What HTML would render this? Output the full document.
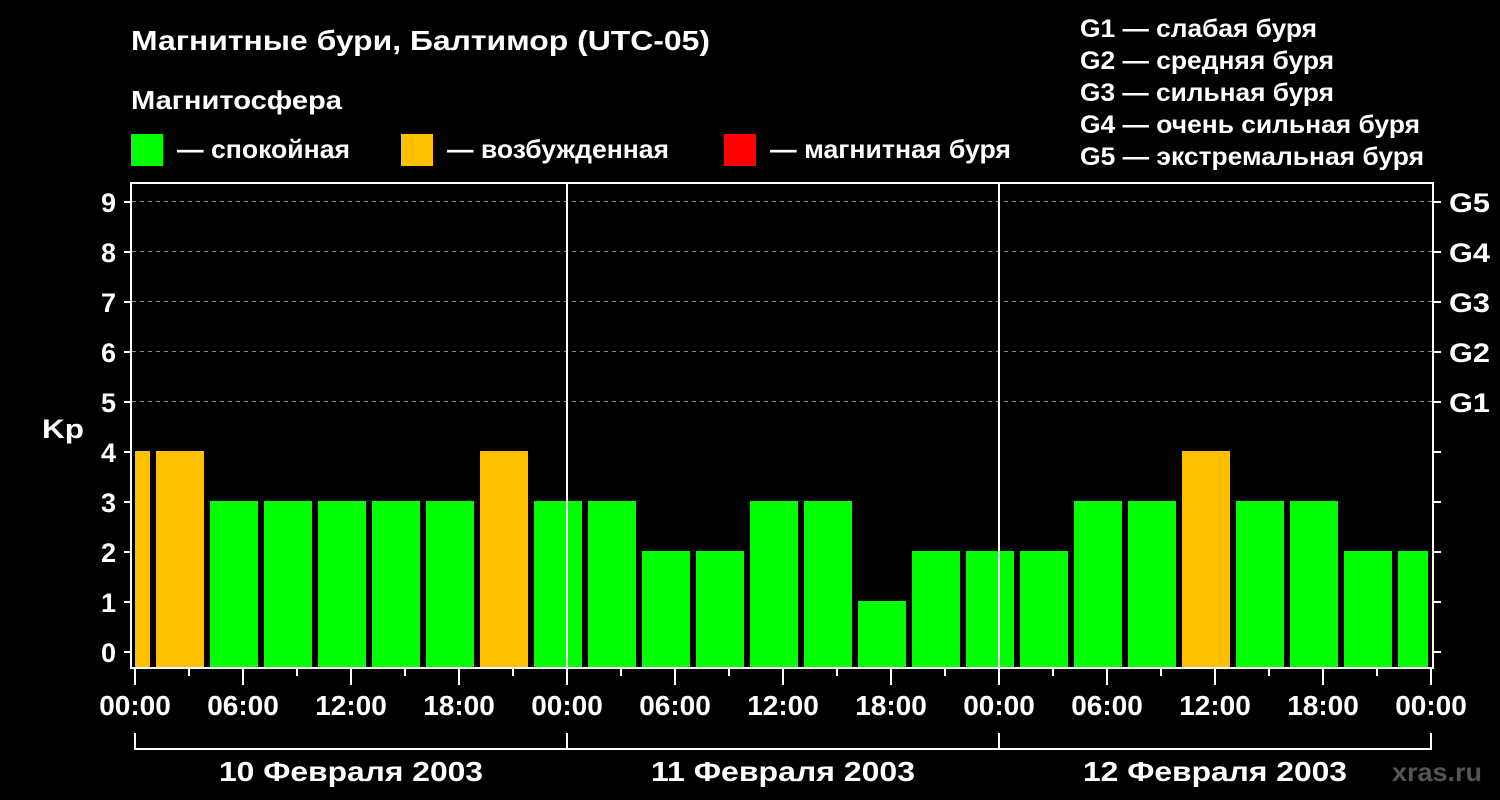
<!DOCTYPE html><html><head><meta charset="utf-8"><style>body{margin:0;background:#000}svg{display:block}text{font-family:"Liberation Sans",sans-serif;font-weight:bold;fill:#fff}</style></head><body>
<svg width="1500" height="800" viewBox="0 0 1500 800" xmlns="http://www.w3.org/2000/svg">
<rect width="1500" height="800" fill="#000"/>
<text x="131" y="50" font-size="28" textLength="579" lengthAdjust="spacingAndGlyphs">Магнитные бури, Балтимор (UTC-05)</text>
<text x="131" y="109" font-size="26" textLength="211" lengthAdjust="spacingAndGlyphs">Магнитосфера</text>
<rect x="131" y="134" width="32" height="32" fill="#00ff00"/><text x="177" y="158" font-size="26" textLength="173" lengthAdjust="spacingAndGlyphs">— спокойная</text>
<rect x="401" y="134" width="32" height="32" fill="#ffc000"/><text x="447" y="158" font-size="26" textLength="222" lengthAdjust="spacingAndGlyphs">— возбужденная</text>
<rect x="724" y="134" width="32" height="32" fill="#ff0000"/><text x="770" y="158" font-size="26" textLength="241" lengthAdjust="spacingAndGlyphs">— магнитная буря</text>
<g font-size="25"><text x="1080" y="37" textLength="237" lengthAdjust="spacingAndGlyphs">G1 — слабая буря</text><text x="1080" y="69" textLength="254" lengthAdjust="spacingAndGlyphs">G2 — средняя буря</text><text x="1080" y="101" textLength="254" lengthAdjust="spacingAndGlyphs">G3 — сильная буря</text><text x="1080" y="133" textLength="340" lengthAdjust="spacingAndGlyphs">G4 — очень сильная буря</text><text x="1080" y="165" textLength="344" lengthAdjust="spacingAndGlyphs">G5 — экстремальная буря</text></g>
<g stroke="#888" stroke-dasharray="4,4" stroke-width="1">
<line x1="132" x2="1432" y1="201.5" y2="201.5"/><line x1="132" x2="1432" y1="251.5" y2="251.5"/><line x1="132" x2="1432" y1="301.5" y2="301.5"/><line x1="132" x2="1432" y1="351.5" y2="351.5"/><line x1="132" x2="1432" y1="401.5" y2="401.5"/></g>
<g fill="#00ff00">
<rect x="135" y="451" width="15" height="217" fill="#ffc000"/>
<rect x="156" y="451" width="48" height="217" fill="#ffc000"/>
<rect x="210" y="501" width="48" height="167"/>
<rect x="264" y="501" width="48" height="167"/>
<rect x="318" y="501" width="48" height="167"/>
<rect x="372" y="501" width="48" height="167"/>
<rect x="426" y="501" width="48" height="167"/>
<rect x="480" y="451" width="48" height="217" fill="#ffc000"/>
<rect x="534" y="501" width="48" height="167"/>
<rect x="588" y="501" width="48" height="167"/>
<rect x="642" y="551" width="48" height="117"/>
<rect x="696" y="551" width="48" height="117"/>
<rect x="750" y="501" width="48" height="167"/>
<rect x="804" y="501" width="48" height="167"/>
<rect x="858" y="601" width="48" height="67"/>
<rect x="912" y="551" width="48" height="117"/>
<rect x="966" y="551" width="48" height="117"/>
<rect x="1020" y="551" width="48" height="117"/>
<rect x="1074" y="501" width="48" height="167"/>
<rect x="1128" y="501" width="48" height="167"/>
<rect x="1182" y="451" width="48" height="217" fill="#ffc000"/>
<rect x="1236" y="501" width="48" height="167"/>
<rect x="1290" y="501" width="48" height="167"/>
<rect x="1344" y="551" width="48" height="117"/>
<rect x="1398" y="551" width="30" height="117"/>
</g>
<g stroke="#fff" stroke-width="2" fill="none">
<rect x="131" y="183" width="1302" height="485"/>
<line x1="567" y1="183" x2="567" y2="668"/><line x1="999" y1="183" x2="999" y2="668"/>
<path d="M124 652h7M124 602h7M124 552h7M124 502h7M124 452h7M124 402h7M124 352h7M124 302h7M124 252h7M124 202h7"/>
<path d="M1433 652h8M1433 602h8M1433 552h8M1433 502h8M1433 452h8M1433 402h8M1433 352h8M1433 302h8M1433 252h8M1433 202h8"/>
<path d="M135 669v16M243 669v16M351 669v16M459 669v16M567 669v16M675 669v16M783 669v16M891 669v16M999 669v16M1107 669v16M1215 669v16M1323 669v16M1431 669v16"/>
<path d="M189 669v7M297 669v7M405 669v7M513 669v7M621 669v7M729 669v7M837 669v7M945 669v7M1053 669v7M1161 669v7M1269 669v7M1377 669v7"/>
<path d="M135 733v16H1431V733M567 733v16M999 733v16"/>
</g>
<g font-size="27" text-anchor="end"><text x="116" y="662">0</text><text x="116" y="612">1</text><text x="116" y="562">2</text><text x="116" y="512">3</text><text x="116" y="462">4</text><text x="116" y="412">5</text><text x="116" y="362">6</text><text x="116" y="312">7</text><text x="116" y="262">8</text><text x="116" y="212">9</text></g>
<text x="42" y="438" font-size="27" textLength="42" lengthAdjust="spacingAndGlyphs">Kp</text>
<g font-size="27"><text x="1449" y="212" textLength="41" lengthAdjust="spacingAndGlyphs">G5</text><text x="1449" y="262" textLength="41" lengthAdjust="spacingAndGlyphs">G4</text><text x="1449" y="312" textLength="41" lengthAdjust="spacingAndGlyphs">G3</text><text x="1449" y="362" textLength="41" lengthAdjust="spacingAndGlyphs">G2</text><text x="1449" y="412" textLength="41" lengthAdjust="spacingAndGlyphs">G1</text></g>
<g font-size="28" text-anchor="middle"><text x="135" y="715">00:00</text><text x="243" y="715">06:00</text><text x="351" y="715">12:00</text><text x="459" y="715">18:00</text><text x="567" y="715">00:00</text><text x="675" y="715">06:00</text><text x="783" y="715">12:00</text><text x="891" y="715">18:00</text><text x="999" y="715">00:00</text><text x="1107" y="715">06:00</text><text x="1215" y="715">12:00</text><text x="1323" y="715">18:00</text><text x="1431" y="715">00:00</text></g>
<g font-size="28"><text x="219" y="781" textLength="264" lengthAdjust="spacingAndGlyphs">10 Февраля 2003</text><text x="651" y="781" textLength="264" lengthAdjust="spacingAndGlyphs">11 Февраля 2003</text><text x="1083" y="781" textLength="264" lengthAdjust="spacingAndGlyphs">12 Февраля 2003</text></g>
<text x="1392" y="781" font-size="26" style="fill:#555" textLength="90" lengthAdjust="spacingAndGlyphs">xras.ru</text>
</svg></body></html>
